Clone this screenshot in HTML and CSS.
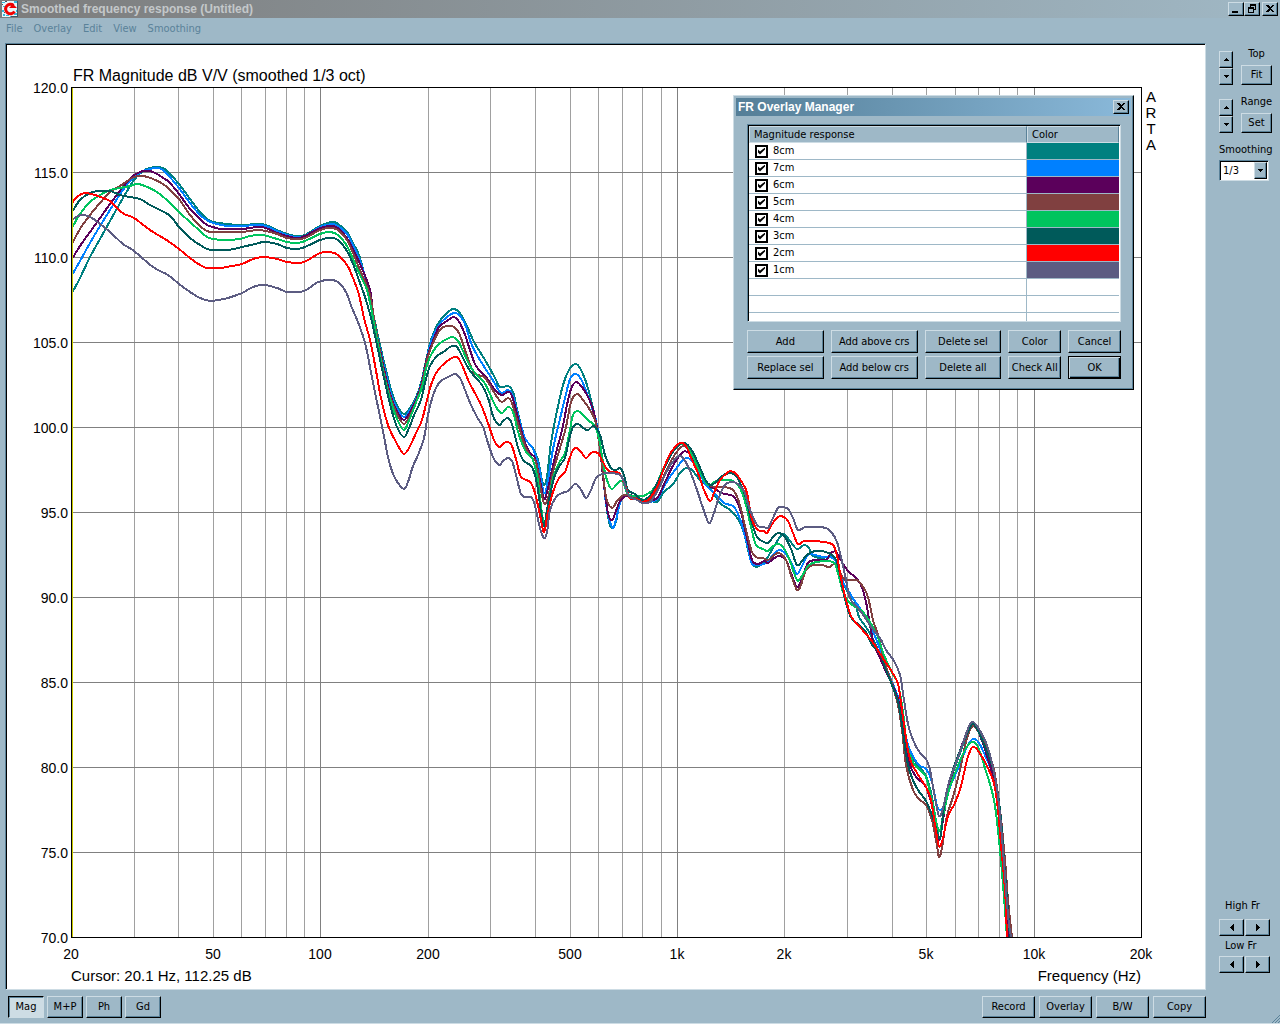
FILE: index.html
```html
<!DOCTYPE html>
<html lang="en">
<head>
<meta charset="utf-8">
<title>Smoothed frequency response (Untitled)</title>
<link rel="stylesheet" href="styles.css">
</head>
<body>
<div class="window">
  <header class="titlebar">
    <svg class="app-icon" viewBox="0 0 16 16" aria-hidden="true">
      <rect width="16" height="16" fill="#e8f6fa"/>
      <path d="M0 1h3v1H0zM12 0h3v2h-3zM1 5h2v1H1zM0 9h2v2H0zM4 14h3v1H4zM12 12h3v2h-3zM1 13h2v2H1zM14 9h1v2h-1zM8 15h3v1H8z" fill="#35b8dc"/>
      <path d="M15 0h1v16H9v-1h6zM0 3h1v1H0zM2 11h1v1H2zM3 0h2v1H3z" fill="#3b5566"/>
      <path d="M12.500 10.500A4.800 4.800 0 1 1 11.500 4.300" fill="none" stroke="#f00000" stroke-width="3"/>
      <path d="M7 7h8l-4-4z" fill="#f00000"/>
    </svg>
    <h1>Smoothed frequency response (Untitled)</h1>
    <div class="window-buttons">
      <button class="btn cap" aria-label="Minimize"><svg viewBox="0 0 12 10"><path d="M2 7h6v2H2z"/></svg></button>
      <button class="btn cap" aria-label="Restore"><svg viewBox="0 0 12 10"><path d="M4 0h6v6H8V5h1V2H5v1H4zM2 3h6v6H2zM3 5v3h4V5z" fill-rule="evenodd"/></svg></button>
      <button class="btn cap cap-close" aria-label="Close"><svg viewBox="0 0 12 10"><path d="M2 1h2l2 2 2-2h2L7 4.500 10 8H8L6 6 4 8H2l3-3.500z"/></svg></button>
    </div>
  </header>
  <nav class="menubar">
    <a href="#">File</a><a href="#">Overlay</a><a href="#">Edit</a><a href="#">View</a><a href="#">Smoothing</a>
  </nav>
  <div class="body">
    <main class="main">
      <section class="graph sunken">
        <svg class="plot" viewBox="7 45 1197 943" preserveAspectRatio="xMidYMid meet">
          <g id="grid"></g>
          <g id="curves"></g>
          <rect class="frame" x="71.500" y="87.500" width="1070" height="850"/>
          <path class="cursor" d="M72.500 88V937"/>
          <g class="caption">
            <text x="73" y="81" class="heading">FR Magnitude dB V/V (smoothed 1/3 oct)</text>
            <text x="71" y="981">Cursor: 20.1 Hz, 112.25 dB</text>
            <text x="1141" y="981" text-anchor="end">Frequency (Hz)</text>
            <g text-anchor="middle">
              <text x="1151" y="102">A</text><text x="1151" y="118">R</text><text x="1151" y="134">T</text><text x="1151" y="150">A</text>
            </g>
          </g>
          <g id="ticks" class="tick"></g>
        </svg>
        <section class="dialog" role="dialog" aria-labelledby="dlg-title">
          <header class="dialog-title">
            <h2 id="dlg-title">FR Overlay Manager</h2>
            <button class="btn cap" aria-label="Close dialog"><svg viewBox="0 0 12 10"><path d="M2 1h2l2 2 2-2h2L7 4.500 10 8H8L6 6 4 8H2l3-3.500z"/></svg></button>
          </header>
          <div class="dialog-body">
            <div class="list sunken">
              <table>
                <thead><tr><th class="col-name">Magnitude response</th><th class="col-color">Color</th></tr></thead>
                <tbody>
                  <tr><td><label><input type="checkbox" checked>8cm</label></td><td class="c8"></td></tr>
                  <tr><td><label><input type="checkbox" checked>7cm</label></td><td class="c7"></td></tr>
                  <tr><td><label><input type="checkbox" checked>6cm</label></td><td class="c6"></td></tr>
                  <tr><td><label><input type="checkbox" checked>5cm</label></td><td class="c5"></td></tr>
                  <tr><td><label><input type="checkbox" checked>4cm</label></td><td class="c4"></td></tr>
                  <tr><td><label><input type="checkbox" checked>3cm</label></td><td class="c3"></td></tr>
                  <tr><td><label><input type="checkbox" checked>2cm</label></td><td class="c2"></td></tr>
                  <tr><td><label><input type="checkbox" checked>1cm</label></td><td class="c1"></td></tr>
                  <tr><td></td><td></td></tr>
                  <tr><td></td><td></td></tr>
                  <tr><td></td><td></td></tr>
                </tbody>
              </table>
            </div>
            <div class="actions">
              <button class="btn">Add</button><button class="btn">Add above crs</button><button class="btn">Delete sel</button><button class="btn">Color</button><button class="btn">Cancel</button>
              <button class="btn">Replace sel</button><button class="btn">Add below crs</button><button class="btn">Delete all</button><button class="btn">Check All</button><button class="btn default">OK</button>
            </div>
          </div>
        </section>
      </section>
      <footer class="toolbar">
        <div class="views">
          <button class="btn pressed">Mag</button><button class="btn">M+P</button><button class="btn">Ph</button><button class="btn">Gd</button>
        </div>
        <div class="tools">
          <button class="btn">Record</button><button class="btn">Overlay</button><button class="btn">B/W</button><button class="btn">Copy</button>
        </div>
      </footer>
    </main>
    <aside class="side">
      <div class="range">
        <div class="spin">
          <button class="btn" aria-label="Top up"><svg viewBox="0 0 5 3"><path d="M2 0h1v1h1v1h1v1H0V2h1V1h1z"/></svg></button>
          <button class="btn" aria-label="Top down"><svg viewBox="0 0 5 3"><path d="M0 0h5v1H4v1H3v1H2V2H1V1H0z"/></svg></button>
        </div>
        <div class="field"><span>Top</span><button class="btn">Fit</button></div>
      </div>
      <div class="range">
        <div class="spin">
          <button class="btn" aria-label="Range up"><svg viewBox="0 0 5 3"><path d="M2 0h1v1h1v1h1v1H0V2h1V1h1z"/></svg></button>
          <button class="btn" aria-label="Range down"><svg viewBox="0 0 5 3"><path d="M0 0h5v1H4v1H3v1H2V2H1V1H0z"/></svg></button>
        </div>
        <div class="field"><span>Range</span><button class="btn">Set</button></div>
      </div>
      <div class="smooth">
        <label for="smoothing">Smoothing</label>
        <div class="combo sunken">
          <select id="smoothing"><option>1/3</option><option>1/6</option><option>1/12</option></select>
          <span class="btn drop"><svg viewBox="0 0 5 3"><path d="M0 0h5v1H4v1H3v1H2V2H1V1H0z"/></svg></span>
        </div>
      </div>
      <div class="limits">
        <span class="limit-first">High Fr</span>
        <div class="pair">
          <button class="btn" aria-label="High limit down"><svg viewBox="0 0 4 7"><path d="M4 0v7H3V6H2V5H1V4H0V3h1V2h1V1h1V0z"/></svg></button>
          <button class="btn" aria-label="High limit up"><svg viewBox="0 0 4 7"><path d="M0 0h1v1h1v1h1v1h1v1H3v1H2v1H1v1H0z"/></svg></button>
        </div>
        <span>Low Fr</span>
        <div class="pair">
          <button class="btn" aria-label="Low limit down"><svg viewBox="0 0 4 7"><path d="M4 0v7H3V6H2V5H1V4H0V3h1V2h1V1h1V0z"/></svg></button>
          <button class="btn" aria-label="Low limit up"><svg viewBox="0 0 4 7"><path d="M0 0h1v1h1v1h1v1h1v1H3v1H2v1H1v1H0z"/></svg></button>
        </div>
      </div>
    </aside>
  </div>
  <svg class="grip" viewBox="0 0 8 8" aria-hidden="true"><path d="M0 8l8-8M3 8l5-5M6 8l2-2" stroke="#5a8299" stroke-width="1" fill="none"/></svg>
</div>
<script src="plot.js"></script>
</body>
</html>
```

FILE: styles.css
```css
:root {
  --face: #9eb8c7;
  --light: #cddce4;
  --dark: #5a8299;
  --ink: #000;
}

* { box-sizing: border-box; }

body {
  margin: 0;
  background: var(--face);
  color: var(--ink);
  font: 11px/14px "DejaVu Sans Condensed", "DejaVu Sans", sans-serif;
}

h1, h2 {
  margin: 0;
  font: bold 12px/16px "Liberation Sans", Arial, sans-serif;
}

button, select, input { font: inherit; color: inherit; margin: 0; padding: 0; }

.window {
  position: relative;
  display: flex;
  flex-direction: column;
  min-height: 100vh;
  border-bottom: 1px solid var(--light);
}

.titlebar {
  display: flex;
  align-items: center;
  gap: 3px;
  height: 18px;
  padding: 0 2px;
  background: linear-gradient(90deg, #7c7c7c, #a0b8c5);
}
.titlebar h1 { flex: 1; color: #c4c8ca; }
.app-icon { width: 16px; height: 16px; }
.window-buttons { display: flex; }
.cap { width: 16px; height: 14px; }
.cap svg { width: 12px; height: 10px; }
.cap-close { margin-left: 2px; }

.btn {
  display: flex;
  align-items: center;
  justify-content: center;
  background: var(--face);
  border: 1px solid;
  border-color: var(--light) #000 #000 var(--light);
  border-radius: 0;
  box-shadow: inset -1px -1px 0 var(--dark);
  white-space: nowrap;
}
.btn svg { display: block; shape-rendering: crispEdges; }
.btn.pressed {
  background: var(--light);
  border-color: #000 var(--light) var(--light) #000;
  box-shadow: inset 1px 1px 0 var(--dark);
}
.btn.default {
  border-color: #000;
  box-shadow: inset 1px 1px 0 var(--light), inset -1px -1px 0 #000, inset -2px -2px 0 var(--dark);
}

.sunken {
  border: 1px solid;
  border-color: var(--dark) var(--light) var(--light) var(--dark);
  background: #fff;
  box-shadow: inset 1px 1px 0 #000;
}

.menubar { display: flex; gap: 11px; height: 25px; padding: 4px 6px; }
.menubar a { color: var(--dark); text-decoration: none; }

.body { flex: 1; display: grid; grid-template-columns: 1fr 74px; }
.main { display: flex; flex-direction: column; padding-left: 5px; }

.graph { position: relative; flex: 1; display: flex; min-height: 0; padding: 1px; }
.plot { display: block; width: 100%; height: auto; font-family: "Liberation Sans", Arial, sans-serif; }
.plot path, .plot rect { fill: none; shape-rendering: crispEdges; }
.minor { stroke: #a0a0a0; }
.major { stroke: #808080; }
.plot .frame { stroke: #000; }
.cursor { stroke: #c8c800; }
.curve { stroke-width: 2; stroke-linejoin: round; }
.caption { font-size: 15px; }
.heading { font-size: 16px; }
.tick { font-size: 14px; }

.toolbar { display: flex; justify-content: space-between; padding: 6px 0 5px 3px; }
.toolbar .btn { height: 22px; }
.views { display: flex; gap: 3px; }
.views .btn { width: 36px; }
.tools { display: flex; gap: 4px; }
.tools .btn { width: 53px; }

.dialog {
  position: absolute;
  left: 727px;
  top: 51px;
  width: 401px;
  padding: 2px;
  background: var(--face);
  border: 1px solid;
  border-color: var(--light) #000 #000 var(--light);
  box-shadow: inset -1px -1px 0 var(--dark);
}
.dialog-title {
  display: flex;
  align-items: center;
  justify-content: space-between;
  height: 18px;
  padding: 0 2px;
  color: #fff;
  background: linear-gradient(90deg, #547e97, #8ab9da);
}
.dialog-title .cap { color: #000; }
.dialog-body { display: grid; gap: 8px; padding: 8px 10px 8px 11px; }

.list { height: 198px; padding: 1px; overflow: hidden; }
table { width: 100%; border-collapse: separate; border-spacing: 0; table-layout: fixed; }
th {
  height: 17px;
  padding: 0 4px;
  font-weight: normal;
  line-height: 14px;
  text-align: left;
  background: var(--face);
  border: 1px solid;
  border-color: var(--light) var(--dark) var(--light) var(--light);
}
.col-color { width: 92px; }
td { height: 17px; padding: 0; line-height: 14px; border-bottom: 1px solid var(--face); }
td:first-child { border-right: 1px solid var(--face); }
td label { display: flex; align-items: center; gap: 5px; height: 16px; padding-left: 6px; }
input[type="checkbox"] {
  appearance: none;
  width: 13px;
  height: 13px;
  border: 2px solid #000;
  background: #fff;
}
input[type="checkbox"]:checked::before {
  content: "";
  display: block;
  width: 7px;
  height: 7px;
  margin: 1px;
  background: #000;
  clip-path: polygon(0 2px, 2px 4px, 7px 0, 7px 2px, 2px 7px, 0 5px);
}
.c8 { background: #008080; }
.c7 { background: #0080ff; }
.c6 { background: #5b005b; }
.c5 { background: #804040; }
.c4 { background: #00c45e; }
.c3 { background: #005a5a; }
.c2 { background: #ff0000; }
.c1 { background: #5c5c82; }

.actions { display: grid; grid-template-columns: 77fr 87fr 77fr 53fr 53fr; gap: 3px 7px; }
.actions .btn { height: 23px; }

.side { display: flex; flex-direction: column; padding: 4px 8px 50px 13px; }
.range { display: flex; gap: 8px; height: 48px; }
.spin { padding-top: 4px; }
.spin .btn { width: 14px; height: 17px; }
.spin svg, .drop svg { width: 5px; height: 3px; }
.field { display: flex; flex-direction: column; align-items: center; gap: 4px; width: 31px; }
.field .btn { width: 31px; height: 20px; }
.combo { display: flex; width: 50px; height: 21px; padding: 1px; margin-top: 3px; }
.combo select {
  flex: 1;
  min-width: 0;
  padding-left: 2px;
  border: 0;
  appearance: none;
  background: #fff;
}
.drop { width: 13px; pointer-events: none; }
.limits { display: flex; flex-direction: column; gap: 3px; margin-top: auto; }
.limits span { padding-left: 6px; }
.limits .limit-first { padding-bottom: 3px; }
.pair { display: flex; gap: 1px; }
.pair .btn { width: 25px; height: 17px; }
.pair svg { width: 4px; height: 7px; }

.grip { position: absolute; right: 0; bottom: 0; width: 8px; height: 8px; }
```

FILE: plot.js
```js
const NS = 'http://www.w3.org/2000/svg';
const LEFT = 71, RIGHT = 1141, TOP = 87, BOTTOM = 937;
const DECADE = (RIGHT - LEFT) / 3;
const xOf = f => Math.round(LEFT + DECADE * Math.log10(f / 20));
const yOf = db => TOP + (120 - db) * 17;

function add(parent, name, attrs, text) {
  const el = document.createElementNS(NS, name);
  for (const key in attrs) el.setAttribute(key, attrs[key]);
  if (text) el.textContent = text;
  document.getElementById(parent).appendChild(el);
}

for (const base of [10, 100, 1000, 10000]) {
  for (let n = 1; n < 10; n++) {
    const f = base * n;
    if (f <= 20 || f >= 20000) continue;
    add('grid', 'path', { class: n === 1 ? 'major' : 'minor', d: `M${xOf(f) + 0.5} ${TOP}V${BOTTOM}` });
  }
}
for (let db = 120; db >= 70; db -= 5) {
  if (db < 120 && db > 70) add('grid', 'path', { class: 'major', d: `M${LEFT} ${yOf(db) + 0.5}H${RIGHT}` });
  add('ticks', 'text', { x: 68, y: yOf(db) + 6, 'text-anchor': 'end' }, db.toFixed(1));
}
for (const [f, label] of [[20, '20'], [50, '50'], [100, '100'], [200, '200'], [500, '500'], [1000, '1k'], [2000, '2k'], [5000, '5k'], [10000, '10k'], [20000, '20k']]) {
  add('ticks', 'text', { x: xOf(f), y: 959, 'text-anchor': 'middle' }, label);
}

const curves = [
  ['#008080', '72,293 80,278 90,257 100,239 110,221 123,198 134,180 143,171 150,168 157,167 163,168 169,173 179,184 190,199 200,212 207,219 213,222 227,224 242,225 257,224 266,225 277,230 287,234 297,236 305,235 320,226 332,222 338,224 347,232 353,243 360,258 368,290 375,322 380,345 386,370 392,393 398,407 404,414 410,408 416,397 421,383 427,356 432,337 439,322 447,313 453,309 459,312 467,326 474,342 485,360 494,376 500,387 508,386 513,392 518,413 525,438 533,448 538,460 542,480 544,485 547,477 551,443 557,411 563,385 569,370 575,364 580,368 586,382 590,396 596,422 601,453 605,495 609,522 612,528 616,522 619,506 624,496 634,496 643,501 650,500 657,502 664,492 673,484 680,473 686,468 692,470 700,480 710,488 720,503 730,510 738,519 744,533 750,558 754,566 759,566 766,560 773,548 783,534 790,541 797,549 804,545 809,548 813,556 822,558 833,556 838,566 843,582 848,593 855,602 859,617 866,627 875,643 884,665 892,684 898,700 902,720 907,743 913,758 920,768 926,776 932,797 936,822 940,838 944,806 949,785 956,764 963,745 969,729 973,723 979,731 987,748 994,772 1000,810 1003,850 1008,915 1011,937'],
  ['#0080ff', '72,275 80,261 90,243 100,226 110,210 123,190 134,177 143,171 150,169 157,168 163,170 169,176 179,188 190,203 200,215 207,220 213,223 227,226 242,226 257,225 266,226 277,231 287,235 297,237 305,236 320,227 332,224 338,226 347,234 353,245 360,261 369,290 374,322 379,345 386,374 392,397 398,410 404,417 410,410 417,397 422,381 427,358 432,339 439,325 447,317 454,313 459,315 465,324 471,343 477,355 485,368 494,382 501,393 508,390 513,396 518,415 525,438 533,449 539,467 544,493 548,480 553,449 559,423 565,398 570,379 575,374 581,379 588,396 593,411 597,425 602,463 606,503 612,527 616,520 620,503 625,496 634,496 643,502 657,499 666,483 675,470 684,459 690,459 697,468 706,485 715,494 724,503 734,507 741,522 748,548 752,564 758,565 766,563 773,555 779,550 785,553 791,562 797,574 802,566 808,555 815,555 823,557 833,558 838,566 843,582 848,590 854,600 862,611 870,625 877,641 884,662 892,682 899,700 903,722 908,745 914,758 920,766 926,769 932,782 937,806 941,810 945,804 950,787 960,764 967,747 973,739 979,743 987,760 995,780 1001,820 1005,870 1010,937'],
  ['#5b005b', '72,259 80,246 90,232 100,218 110,204 123,187 130,179 134,175 143,171 150,171 157,174 163,178 169,182 179,194 190,209 200,219 207,225 213,227 222,229 242,229 257,227 266,228 277,233 287,236 297,238 305,236 320,228 332,226 338,228 347,238 353,249 360,264 370,290 374,322 380,350 386,378 392,400 398,413 404,420 410,412 417,398 422,382 427,358 433,341 439,327 447,321 453,317 458,320 464,332 470,350 476,366 486,377 495,390 502,395 508,392 512,396 518,418 524,440 530,453 535,458 540,480 544,499 548,488 555,457 562,430 567,405 571,389 576,382 582,387 589,399 594,413 599,440 604,485 608,513 612,520 616,511 620,501 626,496 634,496 643,501 657,498 665,482 674,464 683,452 690,454 698,467 708,484 715,489 724,494 733,496 740,509 747,538 752,560 758,564 764,561 768,563 773,559 779,556 786,560 791,573 797,587 802,578 808,563 816,560 826,560 831,553 836,552 842,562 848,571 855,577 861,585 866,602 870,625 874,645 880,658 887,674 894,688 900,706 905,735 909,762 916,777 926,787 933,810 939,840 943,820 949,785 955,765 962,745 968,730 973,724 979,733 987,756 995,785 1001,825 1005,875 1009,937'],
  ['#804040', '72,244 80,229 90,215 100,203 110,192 120,186 126,182 134,177 143,176 153,179 163,184 169,189 179,199 190,215 200,226 207,231 213,232 227,232 242,232 257,230 266,231 277,234 287,238 297,239 305,238 320,230 330,228 338,230 347,240 353,253 360,270 370,295 375,325 380,352 386,381 392,402 398,416 404,424 410,415 417,400 422,384 427,360 433,343 440,330 446,326 454,327 459,333 464,347 470,364 475,374 484,377 491,387 497,397 502,402 508,398 512,403 517,420 524,443 530,456 536,462 540,485 544,503 548,498 553,472 560,448 566,427 571,402 577,394 583,400 590,410 596,424 602,465 606,497 612,508 617,501 624,495 634,497 643,503 652,499 662,480 671,461 679,449 684,446 692,452 700,470 708,484 716,487 724,487 733,490 739,502 746,530 752,552 758,558 763,558 768,560 773,556 779,553 786,560 791,575 797,590 801,585 806,570 813,565 822,565 829,567 835,564 839,571 844,579 848,580 857,580 863,587 868,597 873,620 879,638 884,660 892,684 898,705 902,730 906,765 913,790 920,800 926,805 932,820 937,846 939,857 942,848 947,816 953,797 960,770 967,738 973,726 979,733 987,750 994,770 1000,810 1005,860 1008,900 1012,937'],
  ['#00c45e', '72,228 80,214 90,202 100,195 110,190 120,188 130,186 137,184 145,186 157,192 169,202 179,212 190,222 200,231 207,237 213,239 225,240 240,239 250,236 262,235 277,239 287,242 297,243 305,241 320,234 330,232 338,235 347,246 353,259 360,275 367,290 373,318 379,350 385,380 392,405 398,421 404,430 410,418 417,400 422,387 427,365 432,353 439,344 447,339 453,337 458,341 463,351 470,366 477,375 484,382 490,394 496,407 502,413 508,407 513,412 519,435 526,452 532,458 537,475 540,498 543,520 545,524 549,500 553,478 559,463 565,453 569,435 573,415 578,411 583,415 589,421 594,425 599,438 604,468 608,483 612,489 616,485 620,481 623,482 628,494 638,496 646,495 655,487 664,467 673,450 680,444 688,447 700,472 708,485 716,481 725,480 733,481 740,488 746,505 751,527 756,545 763,549 768,551 773,546 779,544 785,550 790,561 797,580 802,576 808,566 816,562 833,562 838,573 843,592 848,601 855,607 862,611 870,622 877,635 884,655 892,673 898,684 903,712 907,745 913,762 920,770 926,777 932,800 939,831 944,812 949,790 957,768 965,750 972,742 978,747 985,768 994,800 999,840 1003,885 1007,937'],
  ['#005a5a', '72,212 80,200 90,193 98,191 110,191 120,195 130,197 140,199 150,205 169,215 179,227 190,238 200,245 207,249 213,250 228,250 242,247 255,244 264,242 277,244 287,248 297,249 305,247 320,240 330,238 338,240 347,251 353,264 360,283 366,300 372,322 378,350 384,378 391,408 397,427 404,437 409,428 415,413 421,400 425,383 430,366 437,356 445,351 450,347 456,346 461,354 467,366 474,376 482,385 488,398 493,416 499,425 503,421 508,418 512,424 517,444 523,460 532,467 537,484 541,512 544,526 548,505 554,478 560,465 565,458 569,440 573,427 578,424 583,428 588,430 594,426 600,435 605,455 611,468 616,470 620,468 624,475 628,490 635,494 643,500 652,493 662,473 672,453 680,444 685,443 691,449 698,463 706,481 711,485 716,482 722,476 730,473 736,476 741,485 746,498 751,520 757,537 764,542 768,543 774,536 779,533 785,537 791,549 797,565 802,561 807,555 815,551 826,552 835,558 839,570 843,590 848,610 852,619 858,624 866,632 872,645 880,654 886,670 892,685 898,702 902,725 907,760 912,778 918,790 926,801 933,818 940,838 944,806 948,786 955,764 962,746 968,732 973,724 979,733 987,752 994,773 1000,810 1004,860 1010,937'],
  ['#ff0000', '72,203 78,196 85,193 95,195 103,198 110,201 117,208 124,214 134,218 150,230 168,241 179,249 190,258 200,265 207,268 220,268 232,266 242,264 253,259 264,257 277,259 287,262 300,263 308,260 320,253 330,252 338,255 347,265 353,278 359,295 364,318 370,340 375,365 381,398 388,425 396,442 404,454 411,444 416,433 422,420 427,400 432,382 438,370 446,362 454,357 458,358 462,365 469,382 476,395 482,407 489,426 494,440 499,447 504,443 508,442 512,446 517,463 521,477 530,482 535,493 540,515 544,532 548,512 553,492 559,478 565,472 569,460 573,450 577,448 581,452 586,458 591,453 596,452 600,456 605,466 610,472 619,473 625,485 630,498 637,499 643,502 650,498 658,485 665,465 672,451 680,443 686,446 692,460 698,473 704,490 710,501 714,493 720,480 727,473 731,471 737,475 743,484 747,493 752,520 758,530 764,531 767,533 772,524 778,517 784,517 788,521 793,533 798,544 804,541 812,541 824,542 833,545 837,556 841,578 846,600 851,616 857,624 866,634 874,644 882,657 892,672 898,684 902,710 907,745 911,762 917,773 926,787 931,800 935,825 939,846 943,838 948,816 955,803 961,786 967,760 971,749 974,747 979,752 987,766 994,783 998,810 1001,845 1005,890 1007,937'],
  ['#5c5c82', '72,220 78,216 84,215 92,218 100,224 110,232 123,244 134,251 153,267 168,275 179,284 190,292 200,298 210,301 218,300 228,298 242,293 253,287 264,285 277,288 287,292 300,292 308,289 318,282 330,280 338,282 346,292 352,308 358,322 365,343 371,372 377,402 383,431 388,457 393,474 398,483 404,489 408,482 413,466 418,455 424,438 427,420 431,402 436,388 441,381 448,377 455,374 460,378 465,390 471,405 477,417 483,427 488,443 493,457 499,465 503,461 508,458 512,461 516,475 521,494 526,497 532,498 536,510 540,528 544,538 547,532 550,510 556,497 562,493 568,491 575,484 580,488 586,498 591,490 596,478 602,474 610,473 620,475 624,482 629,496 637,500 643,503 650,502 658,490 665,475 672,463 679,456 684,459 690,471 697,490 703,508 709,523 714,513 719,497 725,485 731,482 738,484 744,491 749,507 757,525 764,527 768,528 773,518 778,508 783,507 788,509 793,518 798,530 805,527 814,527 826,528 832,533 837,542 841,557 845,575 850,598 856,606 864,616 871,627 880,638 886,650 894,661 900,675 904,700 908,724 913,740 920,753 926,759 930,770 935,798 939,816 943,808 949,782 956,763 963,743 969,726 973,722 979,729 987,745 994,772 999,805 1003,850 1008,915 1011,937']
];

// Catmull-Rom spline through the measured points
function smooth(points) {
  let d = `M${points[0]}`;
  for (let i = 0; i < points.length - 1; i++) {
    const a = points[Math.max(i - 1, 0)], b = points[i], c = points[i + 1], e = points[Math.min(i + 2, points.length - 1)];
    d += `C${b[0] + (c[0] - a[0]) / 6} ${b[1] + (c[1] - a[1]) / 6} ${c[0] - (e[0] - b[0]) / 6} ${c[1] - (e[1] - b[1]) / 6} ${c[0]} ${c[1]}`;
  }
  return d;
}

for (const [color, data] of curves) {
  const points = data.split(' ').map(p => p.split(',').map(Number));
  add('curves', 'path', { class: 'curve', stroke: color, d: smooth(points) });
}
```
